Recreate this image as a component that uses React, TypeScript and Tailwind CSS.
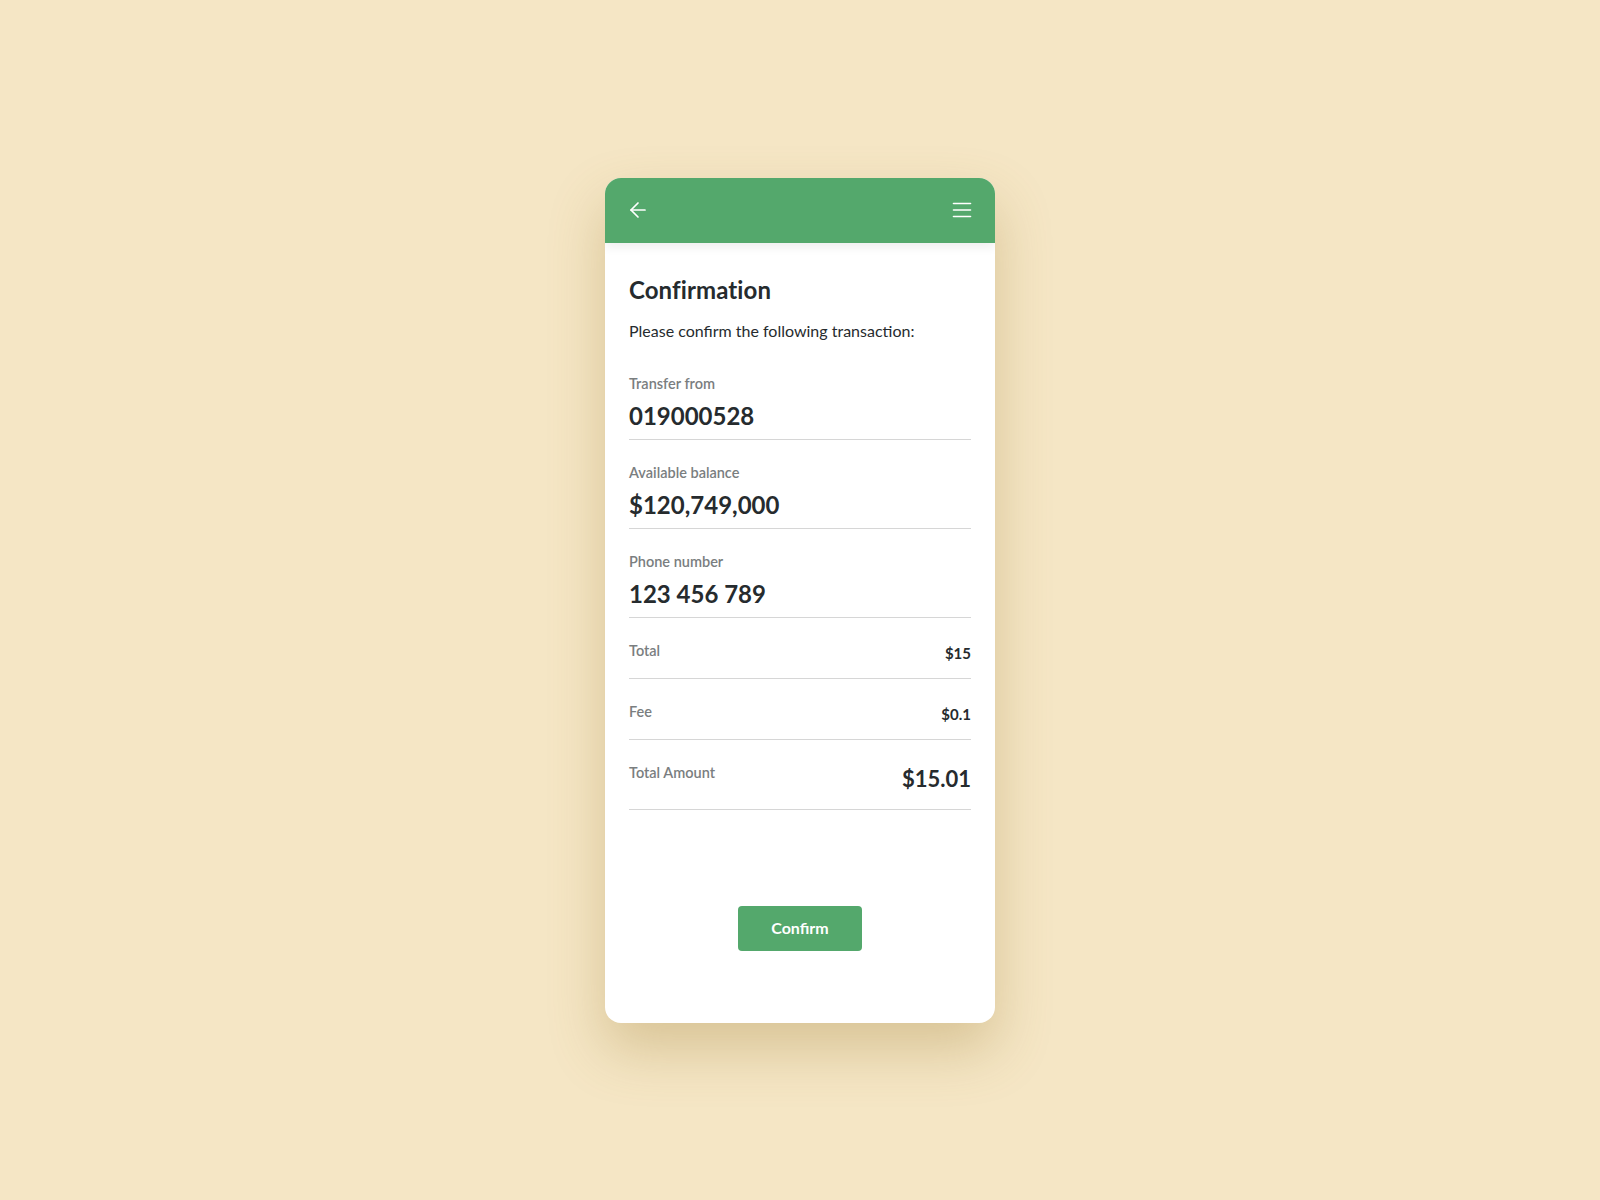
import React from "react";
import { ArrowLeft } from "lucide-react";

const fields = [
  { label: "Transfer from", value: "019000528" },
  { label: "Available balance", value: "$120,749,000" },
  { label: "Phone number", value: "123 456 789" },
];

const MenuIcon = () => (
  <svg width="24" height="24" viewBox="0 0 24 24" fill="none" stroke="currentColor" strokeWidth="1.6" strokeLinecap="round">
    <line x1="3.5" y1="5.5" x2="20.5" y2="5.5" />
    <line x1="3.5" y1="12" x2="20.5" y2="12" />
    <line x1="3.5" y1="18.5" x2="20.5" y2="18.5" />
  </svg>
);

export default function App() {
  return (
    <div className="min-h-screen w-full bg-[#f5e6c5] flex items-center justify-center font-['Lato',sans-serif] text-[#262b2e]">
      <div className="w-[390px] h-[845px] bg-white rounded-2xl overflow-hidden flex flex-col shadow-[0_26px_55px_rgba(150,115,40,0.3)]">
        {/* Header */}
        <header className="relative z-10 h-[65px] shrink-0 bg-[#54a86c] text-white flex items-center justify-between px-[21px] shadow-[0_4px_10px_rgba(0,0,0,0.07)]">
          <ArrowLeft size={24} strokeWidth={1.7} />
          <MenuIcon />
        </header>

        <main className="flex-1 px-6 pt-8 flex flex-col">
          <h1 className="text-2xl leading-[30px] font-bold tracking-[0.1px]">Confirmation</h1>
          <p className="mt-3.5 text-base leading-6">Please confirm the following transaction:</p>

          <div className="mt-2">
            {fields.map((f) => (
              <div key={f.label} className="pt-[23px] pb-[7px] border-b border-[#d6d6d6]">
                <div className="text-[14.5px] leading-5 font-semibold text-[#7a7e80]">{f.label}</div>
                <div className="mt-[6px] text-2xl leading-8 font-bold">{f.value}</div>
              </div>
            ))}

            <div className="pt-[23px] pb-[13px] border-b border-[#d6d6d6] flex items-start justify-between">
              <span className="text-[14.5px] leading-5 font-semibold text-[#7a7e80]">Total</span>
              <span className="text-[15px] leading-6 font-bold">$15</span>
            </div>
            <div className="pt-[23px] pb-[13px] border-b border-[#d6d6d6] flex items-start justify-between">
              <span className="text-[14.5px] leading-5 font-semibold text-[#7a7e80]">Fee</span>
              <span className="text-[15px] leading-6 font-bold">$0.1</span>
            </div>
            <div className="pt-[23px] pb-[14px] border-b border-[#d6d6d6] flex items-start justify-between">
              <span className="text-[14.5px] leading-5 font-semibold text-[#7a7e80]">Total Amount</span>
              <span className="text-[22px] leading-8 font-bold">$15.01</span>
            </div>
          </div>

          <div className="mt-[96px] flex justify-center">
            <button className="w-[124px] h-[45px] rounded bg-[#54a86c] text-white text-base font-bold">
              Confirm
            </button>
          </div>
        </main>
      </div>
    </div>
  );
}
